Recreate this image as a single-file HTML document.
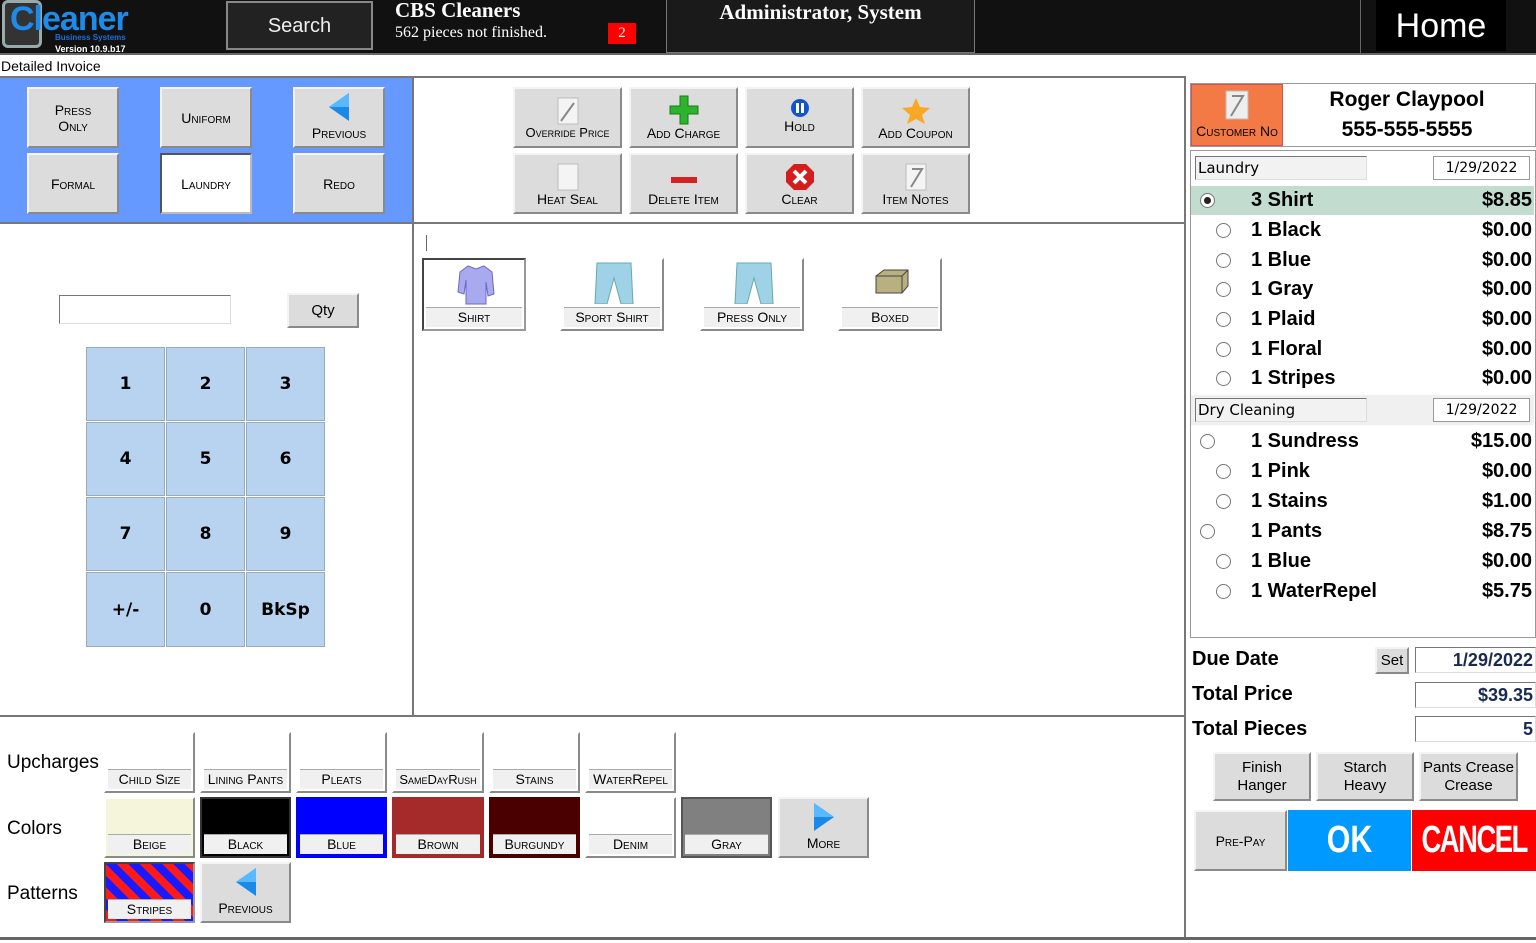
<!DOCTYPE html>
<html><head><meta charset="utf-8"><style>
*{box-sizing:border-box;margin:0;padding:0}
body{width:1536px;height:943px;position:relative;overflow:hidden;background:#fff;font-family:"DejaVu Sans","Liberation Sans",sans-serif;color:#000}
.a{position:absolute}
.btn{position:absolute;background:#dcdcdc;border:2px solid;border-color:#f4f4f4 #8a8a8a #8a8a8a #f4f4f4;font-variant:small-caps;font-size:14px;text-align:center;display:flex;flex-direction:column;align-items:center;justify-content:center;line-height:16px;font-family:"Liberation Sans",sans-serif}
.tb{justify-content:flex-end;padding-bottom:5px}
.key{position:absolute;background:#b8d3f0;border:1px solid #9ab;font-weight:bold;font-size:17px;display:flex;align-items:center;justify-content:center}
.item{position:absolute;background:#fff;border:2px solid;border-color:#fff #8a8a8a #8a8a8a #fff;font-variant:small-caps;font-size:14px;font-family:"Liberation Sans",sans-serif}
.item .lb{position:absolute;left:2px;right:2px;bottom:2px;height:20px;background:#f0f0f0;border-top:1px solid #aaa;text-align:center;line-height:19px}
.row{position:absolute;left:1191px;width:343px;height:29px;font:bold 20px "Liberation Sans",sans-serif;line-height:29px}
.row .n{position:absolute;left:60px}
.row .p{position:absolute;right:2px}
.rd{position:absolute;top:7px;width:15px;height:15px;border:1px solid #777;border-radius:50%;background:#fff}
.lbl{position:absolute;font-size:19px;font-family:"Liberation Sans",sans-serif}
.bl{position:absolute;left:1192px;font:bold 20px "Liberation Sans",sans-serif}
.vb{position:absolute;left:1415px;width:121px;height:26px;border:1px solid;border-color:#777 #ddd #ddd #777;font:bold 18px 'Liberation Sans',sans-serif;color:#1a2a50;text-align:right;padding-right:2px;line-height:24px}
</style></head><body>
<!-- header -->
<div class="a" style="left:0;top:0;width:1536px;height:55px;background:#111"></div>
<div class="a" style="left:0;top:53px;width:1536px;height:2px;background:#666"></div>
<div class="a" style="left:2px;top:0;width:40px;height:48px;border:3px solid #9aa;border-radius:6px;background:#333"></div>
<div class="a" style="left:10px;top:0px;font:bold 34px 'Liberation Sans',sans-serif;color:#1e8be8;letter-spacing:-1px">Cleaner</div>
<div class="a" style="left:55px;top:33px;font:bold 8px 'Liberation Sans',sans-serif;color:#1e6fd8">Business Systems</div>
<div class="a" style="left:55px;top:44px;font:bold 9px 'Liberation Sans',sans-serif;color:#fff">Version 10.9.b17</div>
<div class="a" style="left:226px;top:1px;width:147px;height:49px;border:2px solid #888;background:#222;color:#eee;font:20px 'Liberation Sans',sans-serif;text-align:center;line-height:47px">Search</div>
<div class="a" style="left:395px;top:-2px;font:bold 21px 'Liberation Serif',serif;color:#fff">CBS Cleaners</div>
<div class="a" style="left:395px;top:24px;font:16px 'Liberation Serif',serif;color:#fff">562 pieces not finished.</div>
<div class="a" style="left:608px;top:23px;width:28px;height:21px;background:#f00;color:#fff;font:15px 'Liberation Serif',serif;text-align:center;line-height:21px">2</div>
<div class="a" style="left:666px;top:-2px;width:309px;height:55px;border:1px solid #777;background:#1a1a1a;color:#fff;font:bold 21px 'Liberation Serif',serif;text-align:center;line-height:26px">Administrator, System</div>
<div class="a" style="left:1360px;top:0;width:1px;height:55px;background:#666"></div>
<div class="a" style="left:1376px;top:0;width:130px;height:51px;background:#000;color:#fff;font:34px 'Liberation Sans',sans-serif;text-align:center;line-height:52px">Home</div>
<div class="a" style="left:1px;top:58px;font:14px 'Liberation Sans',sans-serif">Detailed Invoice</div>
<!-- dividers -->
<div class="a" style="left:0;top:76px;width:1186px;height:2px;background:#777"></div>
<div class="a" style="left:0;top:78px;width:412px;height:144px;background:#6699ff"></div>
<div class="a" style="left:412px;top:78px;width:2px;height:638px;background:#777"></div>
<div class="a" style="left:0;top:222px;width:1186px;height:2px;background:#777"></div>
<div class="a" style="left:0;top:715px;width:1186px;height:2px;background:#777"></div>
<div class="a" style="left:1184px;top:78px;width:2px;height:862px;background:#777"></div>
<div class="a" style="left:0;top:937px;width:1536px;height:3px;background:#666"></div>
<!-- left category buttons -->
<div class="btn" style="left:27px;top:87px;width:92px;height:61px">Press<br>Only</div>
<div class="btn" style="left:160px;top:87px;width:92px;height:61px">Uniform</div>
<div class="btn tb" style="left:293px;top:87px;width:92px;height:61px"><svg width="24" height="32" style="margin-bottom:2px"><polygon points="22,2 22,30 2,16" fill="#1a8ae8"/><polygon points="22,2 22,16 2,16" fill="#5ab8ff"/></svg>Previous</div>
<div class="btn" style="left:27px;top:153px;width:92px;height:61px">Formal</div>
<div class="btn" style="left:160px;top:153px;width:92px;height:61px;background:#fff;border-color:#555 #bbb #bbb #555">Laundry</div>
<div class="btn" style="left:293px;top:153px;width:92px;height:61px">Redo</div>
<!-- toolbar -->
<div class="btn tb" style="left:513px;top:87px;width:109px;height:61px;font-size:13px"><svg width="24" height="28"><rect x="2" y="1" width="20" height="26" fill="#f4f4f4" stroke="#bbb"/><line x1="5" y1="24" x2="18" y2="6" stroke="#888" stroke-width="2"/></svg>Override Price</div>
<div class="btn tb" style="left:629px;top:87px;width:109px;height:61px"><svg width="30" height="30"><path d="M11 1h8v10h10v8H19v10h-8V19H1v-8h10z" fill="#2db32d" stroke="#1a7a1a"/></svg>Add Charge</div>
<div class="btn tb" style="left:745px;top:87px;width:109px;height:61px;padding-bottom:12px"><svg width="20" height="20"><circle cx="10" cy="10" r="9" fill="#1155cc"/><rect x="6" y="5" width="3" height="10" fill="#fff"/><rect x="11" y="5" width="3" height="10" fill="#fff"/></svg>Hold</div>
<div class="btn tb" style="left:861px;top:87px;width:109px;height:61px"><svg width="30" height="28"><polygon points="15,1 19,10 29,11 21,18 24,27 15,22 6,27 9,18 1,11 11,10" fill="#f9a825"/></svg>Add Coupon</div>
<div class="btn tb" style="left:513px;top:153px;width:109px;height:61px"><svg width="24" height="28"><rect x="2" y="1" width="20" height="26" fill="#f4f4f4" stroke="#bbb"/></svg>Heat Seal</div>
<div class="btn tb" style="left:629px;top:153px;width:109px;height:61px"><svg width="30" height="24"><rect x="2" y="10" width="26" height="6" fill="#d42222"/></svg>Delete Item</div>
<div class="btn tb" style="left:745px;top:153px;width:109px;height:61px"><svg width="30" height="28"><polygon points="9,1 21,1 29,9 29,19 21,27 9,27 1,19 1,9" fill="#d41e1e"/><path d="M9 8l12 12M21 8L9 20" stroke="#fff" stroke-width="4"/></svg>Clear</div>
<div class="btn tb" style="left:861px;top:153px;width:109px;height:61px"><svg width="24" height="28"><rect x="2" y="1" width="20" height="26" fill="#f4f4f4" stroke="#bbb"/><path d="M8 6h10L7 24" stroke="#888" stroke-width="2" fill="none"/></svg>Item Notes</div>
<!-- numpad -->
<div class="a" style="left:59px;top:295px;width:172px;height:29px;border:1px solid;border-color:#777 #ddd #ddd #777;background:#fff"></div>
<div class="btn" style="left:287px;top:293px;width:72px;height:35px;font-variant:normal;font-size:15px">Qty</div>
<div class="key" style="left:86px;top:347px;width:79px;height:74px">1</div>
<div class="key" style="left:166px;top:347px;width:79px;height:74px">2</div>
<div class="key" style="left:246px;top:347px;width:79px;height:74px">3</div>
<div class="key" style="left:86px;top:422px;width:79px;height:74px">4</div>
<div class="key" style="left:166px;top:422px;width:79px;height:74px">5</div>
<div class="key" style="left:246px;top:422px;width:79px;height:74px">6</div>
<div class="key" style="left:86px;top:497px;width:79px;height:74px">7</div>
<div class="key" style="left:166px;top:497px;width:79px;height:74px">8</div>
<div class="key" style="left:246px;top:497px;width:79px;height:74px">9</div>
<div class="key" style="left:86px;top:572px;width:79px;height:75px">+/-</div>
<div class="key" style="left:166px;top:572px;width:79px;height:75px">0</div>
<div class="key" style="left:246px;top:572px;width:79px;height:75px">BkSp</div>
<!-- items -->
<div class="a" style="left:426px;top:235px;width:1px;height:16px;background:#666"></div>
<div class="item" style="left:422px;top:258px;width:104px;height:73px;border-color:#444 #999 #999 #444"><svg class="a" style="left:32px;top:3px" width="40" height="42"><path d="M12 3l8 3 8-3 8 6 2 22-6 2-2-14v22H10V17L8 31 2 29 4 9z" fill="#a9a9ef" stroke="#6a6ac0"/></svg><div class="lb">Shirt</div></div>
<div class="item" style="left:560px;top:258px;width:104px;height:73px"><svg class="a" style="left:32px;top:2px" width="40" height="42"><path d="M3 1h34l2 41h-12l-7-26-7 26H1z" fill="#9fd2e6" stroke="#6aa"/></svg><div class="lb">Sport Shirt</div></div>
<div class="item" style="left:700px;top:258px;width:104px;height:73px"><svg class="a" style="left:32px;top:2px" width="40" height="42"><path d="M3 1h34l2 41h-12l-7-26-7 26H1z" fill="#9fd2e6" stroke="#6aa"/></svg><div class="lb">Press Only</div></div>
<div class="item" style="left:838px;top:258px;width:104px;height:73px"><svg class="a" style="left:34px;top:8px" width="36" height="28"><path d="M2 8l8-6h24v16l-6 7H2z" fill="#b8b080" stroke="#444"/><path d="M2 8h26v17M28 8l6-6" stroke="#444" fill="none"/></svg><div class="lb">Boxed</div></div>
<!-- bottom -->
<div class="lbl" style="left:7px;top:752px">Upcharges</div>
<div class="lbl" style="left:7px;top:818px">Colors</div>
<div class="lbl" style="left:7px;top:883px">Patterns</div>
<div class="item" style="left:104px;top:732px;width:91px;height:61px"><div class="lb">Child Size</div></div>
<div class="item" style="left:200px;top:732px;width:91px;height:61px"><div class="lb">Lining Pants</div></div>
<div class="item" style="left:296px;top:732px;width:91px;height:61px"><div class="lb">Pleats</div></div>
<div class="item" style="left:392px;top:732px;width:92px;height:61px"><div class="lb" style="font-size:13px">SameDayRush</div></div>
<div class="item" style="left:489px;top:732px;width:91px;height:61px"><div class="lb">Stains</div></div>
<div class="item" style="left:585px;top:732px;width:91px;height:61px"><div class="lb">WaterRepel</div></div>
<div class="item" style="left:104px;top:797px;width:91px;height:61px;background:#f5f5dc"><div class="lb">Beige</div></div>
<div class="item" style="left:200px;top:797px;width:91px;height:61px;background:#000;border-color:#333"><div class="lb">Black</div></div>
<div class="item" style="left:296px;top:797px;width:91px;height:61px;background:#0000ff;border-color:#00f"><div class="lb">Blue</div></div>
<div class="item" style="left:392px;top:797px;width:92px;height:61px;background:#a52a2a;border-color:#a52a2a"><div class="lb">Brown</div></div>
<div class="item" style="left:489px;top:797px;width:91px;height:61px;background:#4b0000;border-color:#4b0000"><div class="lb">Burgundy</div></div>
<div class="item" style="left:585px;top:797px;width:91px;height:61px"><div class="lb">Denim</div></div>
<div class="item" style="left:681px;top:797px;width:91px;height:61px;background:#808080;border-color:#555"><div class="lb">Gray</div></div>
<div class="btn tb" style="left:778px;top:797px;width:91px;height:61px"><svg width="24" height="32" style="margin-bottom:2px"><polygon points="2,2 2,30 22,16" fill="#1a8ae8"/><polygon points="2,2 2,16 22,16" fill="#5ab8ff"/></svg>More</div>
<div class="item" style="left:104px;top:862px;width:91px;height:61px;border-color:#444 #999 #999 #444;background:repeating-linear-gradient(45deg,#ff1a1a 0 8px,#1a1aff 8px 16px)"><div class="lb">Stripes</div></div>
<div class="btn tb" style="left:200px;top:862px;width:91px;height:61px"><svg width="24" height="32" style="margin-bottom:2px"><polygon points="22,2 22,30 2,16" fill="#1a8ae8"/><polygon points="22,2 22,16 2,16" fill="#5ab8ff"/></svg>Previous</div>
<!-- right panel -->
<div class="a" style="left:1190px;top:83px;width:346px;height:64px;border:1px solid #999"></div>
<div class="a" style="left:1191px;top:84px;width:92px;height:62px;background:#f47a45;border:1px solid #c55;font:small-caps 14px 'Liberation Sans',sans-serif;text-align:center;overflow:hidden;white-space:nowrap"><svg style="margin-top:5px" width="26" height="30"><rect x="2" y="1" width="22" height="28" fill="#eee" stroke="#bbb"/><path d="M8 6h11L7 26" stroke="#888" stroke-width="2" fill="none"/></svg><br>Customer No</div>
<div class="a" style="left:1284px;top:85px;width:246px;text-align:center;font:bold 21px 'Liberation Sans',sans-serif;line-height:30px">Roger Claypool<br>555-555-5555</div>
<div class="a" style="left:1190px;top:150px;width:346px;height:488px;border:1px solid #999"></div>
<div class="a" style="left:1195px;top:156px;width:172px;height:24px;border:1px solid;border-color:#777 #ddd #ddd #777;background:#f2f2f2;font:15px 'DejaVu Sans',sans-serif;padding-left:2px;line-height:22px">Laundry</div>
<div class="a" style="left:1433px;top:156px;width:97px;height:24px;border:1px solid #999;font:14px 'DejaVu Sans',sans-serif;text-align:center;line-height:22px">1/29/2022</div>
<div class="row" style="top:186px;background:#c2dccf"><div class="rd" style="left:9px"><div class="a" style="left:3px;top:3px;width:7px;height:7px;border-radius:50%;background:#222"></div></div><span class="n">3 Shirt</span><span class="p">$8.85</span></div>
<div class="row" style="top:216px"><div class="rd" style="left:25px"></div><span class="n">1 Black</span><span class="p">$0.00</span></div>
<div class="row" style="top:246px"><div class="rd" style="left:25px"></div><span class="n">1 Blue</span><span class="p">$0.00</span></div>
<div class="row" style="top:275px"><div class="rd" style="left:25px"></div><span class="n">1 Gray</span><span class="p">$0.00</span></div>
<div class="row" style="top:305px"><div class="rd" style="left:25px"></div><span class="n">1 Plaid</span><span class="p">$0.00</span></div>
<div class="row" style="top:335px"><div class="rd" style="left:25px"></div><span class="n">1 Floral</span><span class="p">$0.00</span></div>
<div class="row" style="top:364px"><div class="rd" style="left:25px"></div><span class="n">1 Stripes</span><span class="p">$0.00</span></div>
<div class="a" style="left:1191px;top:395px;width:343px;height:30px;background:#f0f0f0"></div>
<div class="a" style="left:1195px;top:398px;width:172px;height:24px;border:1px solid;border-color:#777 #ddd #ddd #777;background:#f2f2f2;font:15px 'DejaVu Sans',sans-serif;padding-left:2px;line-height:22px">Dry Cleaning</div>
<div class="a" style="left:1433px;top:398px;width:97px;height:24px;border:1px solid #999;background:#fff;font:14px 'DejaVu Sans',sans-serif;text-align:center;line-height:22px">1/29/2022</div>
<div class="row" style="top:427px"><div class="rd" style="left:9px"></div><span class="n">1 Sundress</span><span class="p">$15.00</span></div>
<div class="row" style="top:457px"><div class="rd" style="left:25px"></div><span class="n">1 Pink</span><span class="p">$0.00</span></div>
<div class="row" style="top:487px"><div class="rd" style="left:25px"></div><span class="n">1 Stains</span><span class="p">$1.00</span></div>
<div class="row" style="top:517px"><div class="rd" style="left:9px"></div><span class="n">1 Pants</span><span class="p">$8.75</span></div>
<div class="row" style="top:547px"><div class="rd" style="left:25px"></div><span class="n">1 Blue</span><span class="p">$0.00</span></div>
<div class="row" style="top:577px"><div class="rd" style="left:25px"></div><span class="n">1 WaterRepel</span><span class="p">$5.75</span></div>
<div class="bl" style="top:648px">Due Date</div>
<div class="bl" style="top:683px">Total Price</div>
<div class="bl" style="top:718px">Total Pieces</div>
<div class="btn" style="left:1375px;top:647px;width:34px;height:27px;font-variant:normal;font-size:15px">Set</div>
<div class="vb" style="top:647px">1/29/2022</div>
<div class="vb" style="top:682px">$39.35</div>
<div class="vb" style="top:716px">5</div>
<div class="btn" style="left:1213px;top:752px;width:98px;height:49px;font-variant:normal;font-size:15px;line-height:18px">Finish<br>Hanger</div>
<div class="btn" style="left:1316px;top:752px;width:98px;height:49px;font-variant:normal;font-size:15px;line-height:18px">Starch<br>Heavy</div>
<div class="btn" style="left:1419px;top:752px;width:99px;height:49px;font-variant:normal;font-size:15px;line-height:18px;white-space:nowrap;overflow:hidden">Pants Crease<br>Crease</div>
<div class="btn" style="left:1194px;top:810px;width:93px;height:61px">Pre-Pay</div>
<div class="a" style="left:1288px;top:810px;width:123px;height:61px;background:#0099ff;color:#fff;font:bold 38px 'Liberation Sans',sans-serif;text-align:center;line-height:61px"><span style="display:inline-block;transform:scaleX(.8)">OK</span></div>
<div class="a" style="left:1412px;top:810px;width:124px;height:61px;background:#ff0000;color:#fff;font:bold 38px 'Liberation Sans',sans-serif;text-align:center;line-height:61px;letter-spacing:-2px;overflow:hidden;white-space:nowrap"><span style="display:inline-block;transform:scaleX(.72);margin-left:-60px;margin-right:-60px">CANCEL</span></div>
</body></html>
